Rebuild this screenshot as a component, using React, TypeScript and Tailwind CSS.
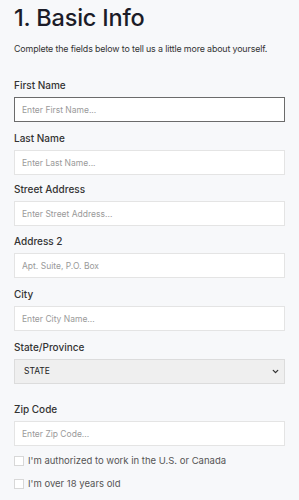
import { ChevronDown } from "lucide-react";

const font = { fontFamily: "Inter, 'Liberation Sans', sans-serif" };

function Field({ label, placeholder, focused, className = "" }: { label: string; placeholder: string; focused?: boolean; className?: string }) {
  return (
    <div className={`flex flex-col ${className}`}>
      <label className="text-[10px] leading-[12px] text-[#333] font-medium">{label}</label>
      <input
        placeholder={placeholder}
        className={`mt-[6px] h-[25px] w-full bg-white px-[7px] text-[8.5px] outline-none placeholder:text-[#9a9a9a] border ${
          focused ? "border-[#6b6b6b]" : "border-[#e4e4e4]"
        }`}
      />
    </div>
  );
}

function Check({ label }: { label: string }) {
  return (
    <label className="flex items-center gap-[4px] text-[9.5px] leading-[12px] text-[#555]">
      <span className="h-[10px] w-[10px] border border-[#d8d8d8] bg-white" />
      {label}
    </label>
  );
}

export default function App() {
  return (
    <div className="min-h-[500px] w-[299px] bg-[#f7f8fa] px-[14px] pt-[4px]" style={font}>
      <h1 className="text-[23.5px] leading-[28px] font-medium text-[#1c1c28] tracking-[-0.2px]">1. Basic Info</h1>
      <p className="mt-[11px] text-[8.9px] leading-[11px] text-[#333] tracking-[-0.15px]">
        Complete the fields below to tell us a little more about yourself.
      </p>

      <Field className="mt-[25px]" label="First Name" placeholder="Enter First Name..." focused />
      <Field className="mt-[10px]" label="Last Name" placeholder="Enter Last Name..." />
      <Field className="mt-[8px]" label="Street Address" placeholder="Enter Street Address..." />
      <Field className="mt-[9px]" label="Address 2" placeholder="Apt. Suite, P.O. Box" />
      <Field className="mt-[10px]" label="City" placeholder="Enter City Name..." />

      <div className="mt-[10px] flex flex-col">
        <label className="text-[10px] leading-[12px] text-[#333] font-medium">State/Province</label>
        <div className="mt-[6px] flex h-[25px] items-center border border-[#dcdcdc] bg-[#efefef] pl-[9px] pr-[4px]">
          <span className="flex-1 text-[8.5px] text-[#222]">STATE</span>
          <ChevronDown size={9} strokeWidth={3.5} className="text-[#333]" />
        </div>
      </div>

      <Field className="mt-[19px]" label="Zip Code" placeholder="Enter Zip Code..." />

      <div className="mt-[9px] flex flex-col gap-[11px]">
        <Check label="I'm authorized to work in the U.S. or Canada" />
        <Check label="I'm over 18 years old" />
      </div>
    </div>
  );
}
